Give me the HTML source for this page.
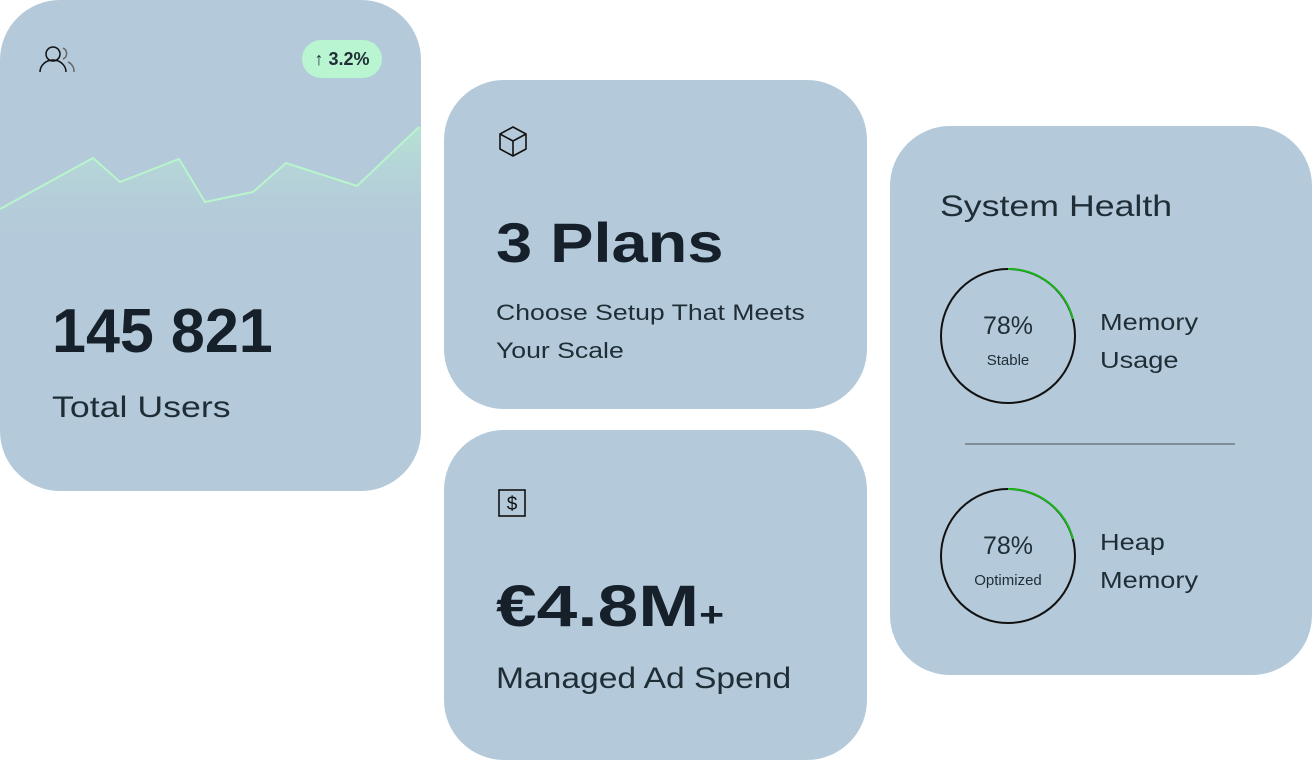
<!DOCTYPE html>
<html><head><meta charset="utf-8"><style>
*{margin:0;padding:0;box-sizing:border-box}
body{width:1312px;height:760px;background:#fff;position:relative;overflow:hidden;font-family:"Liberation Sans",sans-serif;color:#16202a}
.card{position:absolute;background:#b4cada;border-radius:60px;overflow:hidden}
.t{position:absolute;white-space:nowrap;transform-origin:0 50%}
</style></head><body>
<div class="card" style="left:0;top:0;width:421px;height:491px">
<svg width="421" height="491" style="position:absolute;left:0;top:0">
<defs><linearGradient id="g" x1="0" y1="0" x2="0" y2="1"><stop offset="0" stop-color="#b8f5d0" stop-opacity=".55"/><stop offset="1" stop-color="#b4cada" stop-opacity="0"/></linearGradient></defs>
<path d="M0,209 L93,158 L120,182 L179,159 L205,202 L253,192 L286,163 L357,186 L419,127 L421,127 L421,250 L0,250Z" fill="url(#g)"/>
<polyline points="0,209 93,158 120,182 179,159 205,202 253,192 286,163 357,186 419,127" fill="none" stroke="#b8f5cc" stroke-width="2"/>
<g fill="none" stroke="#111" stroke-width="1.5"><circle cx="53" cy="54" r="7"/><path d="M40,72 a13,12 0 0 1 26,0"/></g>
<g fill="none" stroke="#666" stroke-width="1.5"><path d="M63,48 a6,6 0 0 1 0,11"/><path d="M68,62 a10,10 0 0 1 6,10"/></g>
</svg>
<div class="t" style="left:302px;top:40px;width:80px;height:38px;border-radius:19px;background:#b8f5d0;font-size:18px;line-height:38px;text-align:center;font-weight:bold;color:#1f2d36">↑ 3.2%</div>
<div class="t" style="left:52px;top:296px;font-size:62px;font-weight:bold;transform:scaleX(0.985)">145 821</div>
<div class="t" style="left:52px;top:391px;font-size:30px;color:#1f2d36;transform:scaleX(1.19)">Total Users</div>
</div>
<div class="card" style="left:444px;top:80px;width:423px;height:329px">
<svg width="60" height="60" style="position:absolute;left:50px;top:40px" fill="none" stroke="#111" stroke-width="1.6" stroke-linejoin="round"><path d="M19,7 L32,14 L32,29 L19,36 L6,29 L6,14Z M6,14 L19,21 L32,14 M19,21 L19,36"/></svg>
<div class="t" style="left:52px;top:130px;font-size:56px;font-weight:bold;transform:scaleX(1.16)">3 Plans</div>
<div class="t" style="left:52px;top:214px;font-size:22px;line-height:38px;color:#1f2d36;transform:scaleX(1.21)">Choose Setup That Meets<br>Your Scale</div>
</div>
<div class="card" style="left:444px;top:430px;width:423px;height:330px">
<svg width="40" height="40" style="position:absolute;left:54px;top:59px"><rect x="1" y="1" width="26" height="26" fill="none" stroke="#111" stroke-width="1.6"/><text x="14" y="21" font-size="19" text-anchor="middle" font-family="Liberation Sans" fill="#111">$</text></svg>
<div class="t" style="left:52px;top:143px;font-size:58px;font-weight:bold;transform:scaleX(1.26)">€4.8M<span style="font-size:34px">+</span></div>
<div class="t" style="left:52px;top:232px;font-size:30px;color:#1f2d36;transform:scaleX(1.12)">Managed Ad Spend</div>
</div>
<div class="card" style="left:890px;top:126px;width:422px;height:549px">
<div class="t" style="left:50px;top:64px;font-size:30px;color:#1f2d36;transform:scaleX(1.19)">System Health</div>
<svg width="422" height="549" style="position:absolute;left:0;top:0">
<g fill="none" stroke-width="2">
<circle cx="118" cy="210" r="67" stroke="#111"/>
<path d="M118,143 A67,67 0 0 1 183,193" stroke="#1bb51b"/>
<circle cx="118" cy="430" r="67" stroke="#111"/>
<path d="M118,363 A67,67 0 0 1 183,413" stroke="#1bb51b"/>
</g>
<line x1="75" y1="318" x2="345" y2="318" stroke="#6f7a82" stroke-width="1.5"/>
</svg>
<div class="t" style="left:68px;top:186px;width:100px;text-align:center;font-size:25px;color:#1f2d36">78%</div>
<div class="t" style="left:68px;top:226px;width:100px;text-align:center;font-size:15px;color:#1f2d36">Stable</div>
<div class="t" style="left:210px;top:177px;font-size:23px;line-height:38px;color:#1f2d36;transform:scaleX(1.18)">Memory<br>Usage</div>
<div class="t" style="left:68px;top:406px;width:100px;text-align:center;font-size:25px;color:#1f2d36">78%</div>
<div class="t" style="left:68px;top:446px;width:100px;text-align:center;font-size:15px;color:#1f2d36">Optimized</div>
<div class="t" style="left:210px;top:397px;font-size:23px;line-height:38px;color:#1f2d36;transform:scaleX(1.18)">Heap<br>Memory</div>
</div>
</body></html>
